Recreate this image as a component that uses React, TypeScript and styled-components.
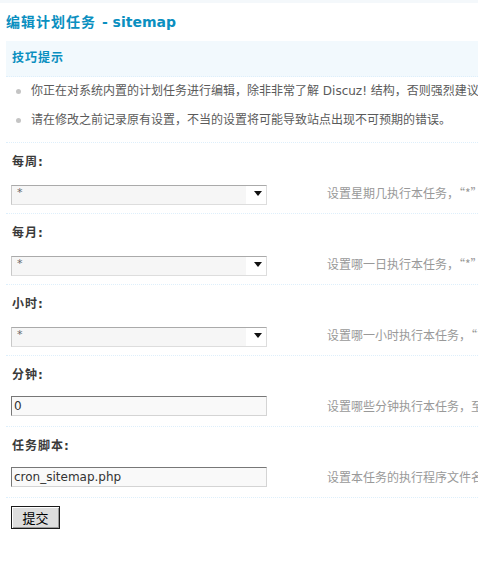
import React from 'react';
import styled, { createGlobalStyle } from 'styled-components';

const GlobalStyle = createGlobalStyle`
  body {
    margin: 0;
    background: #fff;
    overflow: hidden;
    font: 12px/1.5 "DejaVu Sans", "Noto Sans CJK SC", sans-serif;
    color: #333;
  }
`;

const Page = styled.div`
  width: 900px;
  padding-left: 6px;
  border-top: 3px solid #f4f8fb;
`;

const Title = styled.h3`
  margin: 0 0 9px;
  padding-top: 9px;
  font-size: 14px;
  line-height: 20px;
  font-weight: bold;
  letter-spacing: 1px;
  color: #0a8fc0;
`;

const TitleSub = styled.span`
  letter-spacing: 0;
`;

const TipHead = styled.div`
  height: 35px;
  line-height: 35px;
  padding-left: 6px;
  background: #f2f9fd;
  border-bottom: 1px dotted #deeffb;
  font-weight: bold;
  letter-spacing: 1px;
  color: #0a8fc0;
`;

const TipList = styled.ul`
  list-style: none;
  margin: 0;
  padding: 0 0 7px;
`;

const TipItem = styled.li`
  position: relative;
  padding: 5px 0 6px 25px;
  line-height: 18px;
  color: #5a5a5a;
  white-space: nowrap;

  &::before {
    content: '';
    position: absolute;
    left: 10px;
    top: 12px;
    width: 5px;
    height: 5px;
    border-radius: 50%;
    background: #c4c4c4;
  }
`;

const LabelRow = styled.div`
  border-top: 1px dotted #deeffb;
  padding: 10px 6px 6px;
  line-height: 18px;
  font-weight: bold;
  letter-spacing: 1px;
  color: #3a3a3a;
`;

const ValueRow = styled.div`
  display: flex;
  align-items: center;
  padding: 6px 0 10px 5px;
`;

const ControlCell = styled.div`
  width: 316px;
  flex-shrink: 0;
`;

const Hint = styled.div`
  font-family: "Noto Sans CJK SC", "DejaVu Sans", sans-serif;
  color: #999;
  line-height: 18px;
  white-space: nowrap;
`;

const SelectWrap = styled.div`
  position: relative;
  width: 256px;
  height: 20px;
`;

const Select = styled.select`
  appearance: none;
  box-sizing: border-box;
  width: 100%;
  height: 20px;
  margin: 0;
  padding: 0 0 4px 5px;
  border: 1px solid;
  border-color: #aaa #ddd #ddd #c8c8c8;
  border-radius: 0;
  background: linear-gradient(to right, #f6f6f6 calc(100% - 20px), #fff 0);
  font: 11px "DejaVu Sans", sans-serif;
  color: #666;
  outline: none;
`;

const Arrow = styled.span`
  position: absolute;
  right: 5px;
  top: 8px;
  width: 0;
  height: 0;
  border-left: 4px solid transparent;
  border-right: 4px solid transparent;
  border-top: 5px solid #111;
  pointer-events: none;
`;

const TextInput = styled.input`
  box-sizing: border-box;
  width: 256px;
  height: 20px;
  margin: 0;
  padding: 0 2px;
  border: 1px solid;
  border-color: #777 #d4d4d4 #d4d4d4 #777;
  background: #f9f9f9;
  font: 12px "DejaVu Sans", sans-serif;
  color: #333;
  outline: none;
`;

const SubmitRow = styled.div`
  border-top: 1px dotted #deeffb;
  padding: 8px 0 0 5px;
`;

const SubmitButton = styled.button`
  width: 49px;
  height: 23px;
  padding: 0;
  border: 1px solid #1a1a1a;
  background: #ddd;
  box-shadow: inset 1px 1px #fff, inset -1px -1px #999;
  font: 13px "Noto Sans CJK SC", sans-serif;
  color: #000;
  cursor: pointer;
`;

type Field = {
  label: string;
  hint: string;
  kind: 'select' | 'text';
  value: string;
};

const fields: Field[] = [
  { label: '每周:', kind: 'select', value: '*', hint: '设置星期几执行本任务，“*”为不限制。本设置会覆盖下面的“日”设定' },
  { label: '每月:', kind: 'select', value: '*', hint: '设置哪一日执行本任务，“*”为不限制' },
  { label: '小时:', kind: 'select', value: '*', hint: '设置哪一小时执行本任务，“*”为不限制' },
  { label: '分钟:', kind: 'text', value: '0', hint: '设置哪些分钟执行本任务，至多可以设置 12 个分钟值，多个值之间用半角逗号“,”隔开，留空为不限制' },
  { label: '任务脚本:', kind: 'text', value: 'cron_sitemap.php', hint: '设置本任务的执行程序文件名，请勿包含路径，程序脚本统一存放于 source/include/cron/ 目录中' },
];

const App: React.FC = () => {
  return (
    <Page>
      <GlobalStyle />
      <Title>
        编辑计划任务 <TitleSub>- sitemap</TitleSub>
      </Title>
      <TipHead>技巧提示</TipHead>
      <TipList>
        <TipItem>你正在对系统内置的计划任务进行编辑，除非非常了解 Discuz! 结构，否则强烈建议不要修改默认设置。</TipItem>
        <TipItem>请在修改之前记录原有设置，不当的设置将可能导致站点出现不可预期的错误。</TipItem>
      </TipList>
      <form onSubmit={(e) => e.preventDefault()}>
        {fields.map((f) => (
          <div key={f.label}>
            <LabelRow>{f.label}</LabelRow>
            <ValueRow>
              <ControlCell>
                {f.kind === 'select' ? (
                  <SelectWrap>
                    <Select defaultValue={f.value}>
                      <option value="*">*</option>
                    </Select>
                    <Arrow />
                  </SelectWrap>
                ) : (
                  <TextInput type="text" defaultValue={f.value} />
                )}
              </ControlCell>
              <Hint>{f.hint}</Hint>
            </ValueRow>
          </div>
        ))}
        <SubmitRow>
          <SubmitButton type="submit">提交</SubmitButton>
        </SubmitRow>
      </form>
    </Page>
  );
};

export default App;
